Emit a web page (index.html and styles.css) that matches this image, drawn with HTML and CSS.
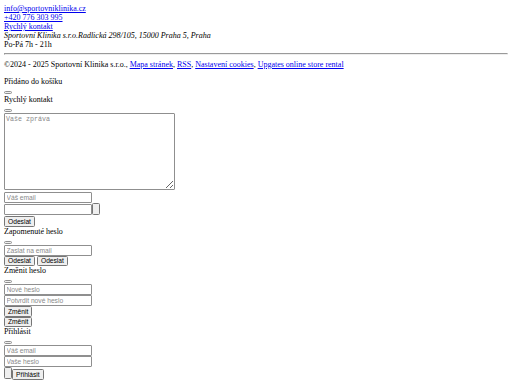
FILE: index.html
```html
<!DOCTYPE html>
<html lang="cs">
<head>
<meta charset="utf-8">
<title>Sportovní Klinika</title>
<link rel="stylesheet" href="styles.css">
</head>
<body>
<div class="contact">
  <a href="#">info@sportovniklinika.cz</a><br>
  <a href="#">+420 776 303 995</a><br>
  <a href="#">Rychlý kontakt</a><br>
  <em>Sportovní Klinika s.r.o.Radlická 298/105, 15000 Praha 5, Praha</em><br>
  Po-Pá 7h - 21h
</div>
<hr>
<p class="footer">©2024 - 2025 Sportovní Klinika s.r.o., <a href="#">Mapa stránek</a>, <a href="#">RSS</a>, <a href="#">Nastavení cookies</a>, <a href="#">Upgates online store rental</a></p>
<div class="modal">
  <div>Přidáno do košíku</div>
  <div><button class="close" type="button"></button></div>
</div>
<div class="modal">
  <div>Rychlý kontakt</div>
  <div><button class="close" type="button"></button></div>
  <div><textarea class="msg" placeholder="Vaše zpráva"></textarea></div>
  <div><input type="text" placeholder="Váš email"></div>
  <div class="row end"><input type="text"><button class="blank" type="button"></button></div>
  <div><button type="button">Odeslat</button></div>
</div>
<div class="modal">
  <div>Zapomenuté heslo</div>
  <div><button class="close" type="button"></button></div>
  <div><input type="text" placeholder="Zaslat na email"></div>
  <div><button type="button">Odeslat</button> <button type="button">Odeslat</button></div>
</div>
<div class="modal">
  <div>Změnit heslo</div>
  <div><button class="close" type="button"></button></div>
  <div><input type="password" placeholder="Nové heslo"></div>
  <div><input type="password" placeholder="Potvrdit nové heslo"></div>
  <div><button type="button">Změnit</button></div>
  <div><button type="button">Změnit</button></div>
</div>
<div class="modal">
  <div>Přihlásit</div>
  <div><button class="close" type="button"></button></div>
  <div><input type="text" placeholder="Váš email"></div>
  <div><input type="password" placeholder="Vaše heslo"></div>
  <div class="row start"><button class="blank" type="button"></button><button class="shift" type="button">Přihlásit</button></div>
</div>
</body>
</html>
```
FILE: styles.css
```css
html {
  zoom: 0.5;
}
body {
  margin: 8px;
  font-family: "Liberation Serif", "Times New Roman", serif;
  font-size: 16px;
  color: #000;
}
a {
  color: #0000ee;
}
.footer {
  margin: 10px 0 16px;
}
input, button, textarea {
  font-family: "Liberation Sans", Arial, sans-serif;
  font-size: 13.333px;
}
input {
  width: 176px;
  height: 22px;
  box-sizing: border-box;
  padding: 1px 3px;
  border: 2px solid #8f8f8f;
  border-radius: 2px;
}
input::placeholder, textarea::placeholder {
  color: #8a8a8a;
}
button {
  height: 21px;
  box-sizing: border-box;
}
textarea.msg {
  font-family: "Liberation Mono", monospace;
  width: 342px;
  height: 154px;
  box-sizing: border-box;
  border: 2px solid #8f8f8f;
  border-radius: 2px;
}
button.close {
  appearance: none;
  height: 6px;
  width: 16px;
  padding: 0;
  border: 2px solid #8f8f8f;
  border-radius: 3px;
  background: #efefef;
}
.row {
  display: flex;
}
.row.end {
  align-items: flex-end;
  margin-bottom: 2px;
}
.row.start {
  align-items: flex-start;
}
button.blank {
  width: 16px;
  height: 24px;
}
button.shift {
  margin-top: 4px;
}
```
